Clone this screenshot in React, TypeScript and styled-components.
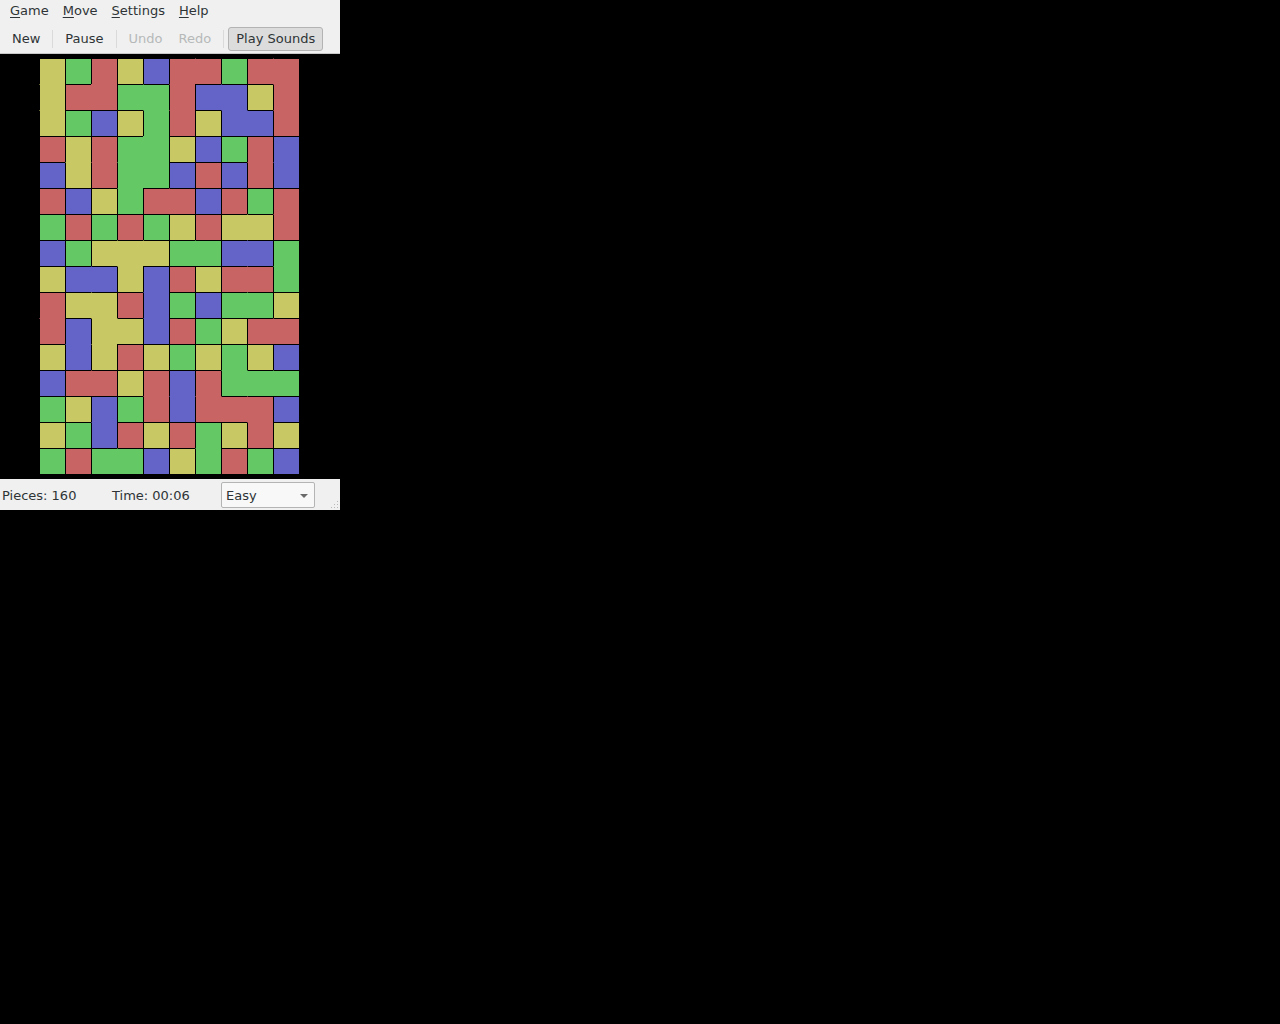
import styled, { createGlobalStyle } from 'styled-components';

const GlobalStyle = createGlobalStyle`
  html, body {
    margin: 0;
    padding: 0;
    background: #000;
  }
  body {
    font-family: 'DejaVu Sans', 'Liberation Sans', sans-serif;
    font-size: 13px;
    color: #2e3436;
  }
`;

type Tone = 'Y' | 'G' | 'R' | 'B';

const COLORS: Record<Tone, string> = {
  Y: '#c8c864',
  G: '#64c864',
  R: '#c86464',
  B: '#6464c8',
};

const ROWS = [
  'YGRYBRRGRR',
  'YRRGGRBBYR',
  'YGBYGRYBBR',
  'RYRGGYBGRB',
  'BYRGGBRBRB',
  'RBYGRRBRGR',
  'GRGRGYRYYR',
  'BGYYYGGBBG',
  'YBBYBRYRRG',
  'RYYRBGBGGY',
  'RBYYBRGYRR',
  'YBYRYGYGYB',
  'BRRYRBRGGG',
  'GYBGRBRRRB',
  'YGBRYRGYRY',
  'GRGGBYGRGB',
];

const grid = ROWS.map((r) => r.split('') as Tone[]);

const GRIP_DOTS = [
  [8, 2], [8, 5], [5, 5], [8, 8], [5, 8], [2, 8],
];

function App() {
  return (
    <>
      <GlobalStyle />
      <Window>
        <MenuBar>
          <MenuItem><u>G</u>ame</MenuItem>
          <MenuItem><u>M</u>ove</MenuItem>
          <MenuItem><u>S</u>ettings</MenuItem>
          <MenuItem><u>H</u>elp</MenuItem>
        </MenuBar>
        <Toolbar>
          <ToolButton>New</ToolButton>
          <Separator />
          <ToolButton>Pause</ToolButton>
          <Separator />
          <ToolButton $disabled>Undo</ToolButton>
          <ToolButton $disabled>Redo</ToolButton>
          <Separator />
          <ToolButton $active>Play Sounds</ToolButton>
        </Toolbar>
        <BoardArea>
          <Board>
            {grid.map((row, r) =>
              row.map((tone, c) => (
                <Cell
                  key={`${r}-${c}`}
                  $color={COLORS[tone]}
                  $left={c === 0 || grid[r][c - 1] !== tone}
                  $top={r === 0 || grid[r - 1][c] !== tone}
                />
              ))
            )}
          </Board>
        </BoardArea>
        <StatusBar>
          <StatusText>Pieces: 160</StatusText>
          <StatusText>Time: 00:06</StatusText>
          <Combo>
            <span>Easy</span>
            <Arrow />
          </Combo>
          <Grip>
            <svg width="10" height="10" viewBox="0 0 10 10">
              {GRIP_DOTS.map(([x, y]) => (
                <rect key={`${x}${y}`} x={x} y={y} width="1" height="1" fill="#b8b8b8" />
              ))}
            </svg>
          </Grip>
        </StatusBar>
      </Window>
    </>
  );
}

export default App;

const Window = styled.div`
  width: 340px;
  display: flex;
  flex-direction: column;
`;

const MenuBar = styled.div`
  height: 22px;
  background: #f0f0f0;
  display: flex;
  align-items: center;
  padding-left: 3px;
`;

const MenuItem = styled.div`
  padding: 0 7px;
  line-height: 22px;
  color: #2e3436;

  u {
    text-decoration-thickness: 1px;
    text-underline-offset: 2px;
  }
`;

const Toolbar = styled.div`
  height: 31px;
  box-sizing: border-box;
  background: #f0f0f0;
  border-bottom: 1px solid #c8c8c8;
  display: flex;
  align-items: center;
  padding: 2px 0 0 4px;
  height: 32px;
`;

const ToolButton = styled.div<{ $disabled?: boolean; $active?: boolean }>`
  height: 22px;
  line-height: 22px;
  padding: 0 7px;
  color: ${(p) => (p.$disabled ? '#b6b9b9' : '#2e3436')};
  border: 1px solid ${(p) => (p.$active ? '#b3b3b3' : 'transparent')};
  border-radius: 3px;
  background: ${(p) => (p.$active ? '#dcdcdc' : 'transparent')};
`;

const Separator = styled.div`
  width: 1px;
  height: 18px;
  background: #dadada;
  margin: 0 4px;
`;

const BoardArea = styled.div`
  height: 425px;
  background: #000;
  display: flex;
  justify-content: center;
  align-items: flex-start;
  padding-top: 4px;
  box-sizing: border-box;
`;

const Board = styled.div`
  display: grid;
  grid-template-columns: repeat(10, 26px);
  grid-template-rows: repeat(16, 26px);
  background: #000;
  padding: 0 1px 1px 0;
  margin-right: 1px;
`;

const Cell = styled.div<{ $color: string; $left: boolean; $top: boolean }>`
  box-sizing: border-box;
  background: ${(p) => p.$color};
  border-left: 1px solid ${(p) => (p.$left ? '#000' : p.$color)};
  border-top: 1px solid ${(p) => (p.$top ? '#000' : p.$color)};
`;

const StatusBar = styled.div`
  height: 31px;
  box-sizing: border-box;
  background: #f0f0f0;
  display: flex;
  align-items: center;
  position: relative;
  padding: 1px 0 0 2px;
`;

const StatusText = styled.div`
  width: 110px;
  color: #2e3436;
`;

const Combo = styled.div`
  width: 94px;
  height: 26px;
  margin-left: -1px;
  box-sizing: border-box;
  border: 1px solid #b4b4b4;
  border-radius: 2px;
  background: #f8f8f8;
  display: flex;
  align-items: center;
  justify-content: space-between;
  padding: 1px 6px 0 4px;
  color: #2e3436;
`;

const Arrow = styled.div`
  width: 0;
  height: 0;
  border-left: 4px solid transparent;
  border-right: 4px solid transparent;
  border-top: 4px solid #6a6a6a;
`;

const Grip = styled.div`
  position: absolute;
  right: 1px;
  bottom: 1px;
  line-height: 0;
`;
